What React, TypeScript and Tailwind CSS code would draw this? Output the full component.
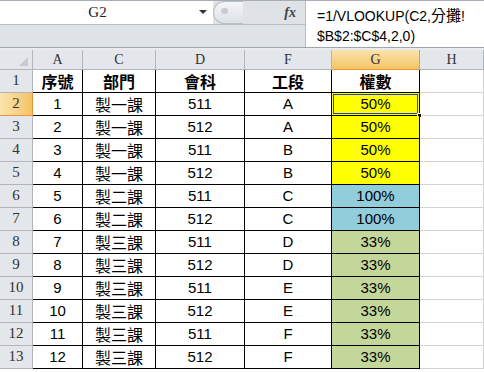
const rows: [number, string, number, string, string, string][] = [
  [1, "製一課", 511, "A", "50%", "bg-[#ffff00]"],
  [2, "製一課", 512, "A", "50%", "bg-[#ffff00]"],
  [3, "製一課", 511, "B", "50%", "bg-[#ffff00]"],
  [4, "製一課", 512, "B", "50%", "bg-[#ffff00]"],
  [5, "製二課", 511, "C", "100%", "bg-[#92cddc]"],
  [6, "製二課", 512, "C", "100%", "bg-[#92cddc]"],
  [7, "製三課", 511, "D", "33%", "bg-[#c4d79b]"],
  [8, "製三課", 512, "D", "33%", "bg-[#c4d79b]"],
  [9, "製三課", 511, "E", "33%", "bg-[#c4d79b]"],
  [10, "製三課", 512, "E", "33%", "bg-[#c4d79b]"],
  [11, "製三課", 511, "F", "33%", "bg-[#c4d79b]"],
  [12, "製三課", 512, "F", "33%", "bg-[#c4d79b]"],
];

const sans = "font-['Liberation_Sans','Noto_Sans_CJK_TC',sans-serif]";
const cjk = "font-['Noto_Sans_CJK_TC',sans-serif]";
const serif = "font-['Liberation_Serif','Noto_Sans_CJK_TC',serif]";

const colHead = `flex items-center justify-center border-r border-b border-[#b0b5bb] bg-[#e3e6ea] text-[14px] text-[#333] ${serif}`;
const selHead = `flex items-center justify-center border-r border-b border-[#f29536] bg-gradient-to-b from-[#fbe3ad] to-[#f3c464] text-[14px] text-[#333] ${serif}`;
const cell = "flex items-center justify-center border-r border-b border-black text-[15px] text-black";

function RowHead({ n, sel }: { n: number; sel?: boolean }) {
  return (
    <div
      className={`flex w-[33px] items-end justify-center border-r border-b pb-[1px] text-[15px] text-[#333] ${serif} ${
        sel ? "border-[#f29536] bg-gradient-to-r from-[#fbe3ad] to-[#f3c464]" : "border-[#b0b5bb] bg-[#e3e6ea]"
      }`}
    >
      {n}
    </div>
  );
}

export default function App() {
  return (
    <div className="relative h-[372px] w-[484px] overflow-hidden bg-white">
      {/* ── Formula bar ── */}
      <div className="flex h-[47px] border-t border-[#a7adb5] bg-[#dfe3e8]">
        <div className="flex w-[305px] flex-col">
          <div className="flex h-[24px] border-b border-[#b7bdc6]">
            <div className={`relative flex w-[213px] items-center justify-center bg-white text-[15px] text-[#222] ${serif}`}>
              <span className="pr-[18px]">G2</span>
              <span className="absolute left-[199px] top-[9px] h-0 w-0 border-x-[4px] border-t-[4px] border-x-transparent border-t-[#333]" />
            </div>
            <div className="relative h-[23px] w-[27px]">
              <div className="absolute left-0 top-0 h-[23px] w-[30px] rounded-l-full border border-r-0 border-[#b9bfc7] bg-gradient-to-b from-[#f4f5f7] to-[#dde1e6]">
                <div className="absolute left-[7px] top-[6px] h-[6px] w-[7px] rounded-full bg-[#c9cdd2]" />
              </div>
            </div>
            <div className="flex flex-1 items-center justify-end pr-[9px]">
              <span className="font-['Liberation_Serif',serif] text-[14px] font-bold italic text-[#444]">fx</span>
            </div>
          </div>
          <div className="flex-1" />
        </div>
        <div className={`flex-1 border-l border-[#b7bdc6] bg-white pl-[11px] pt-[4px] text-[14px] leading-[20px] text-black ${sans}`}>
          <div>
            =1/VLOOKUP(C2,<span className={`${cjk} text-[15px]`}>分攤</span>!
          </div>
          <div>$B$2:$C$4,2,0)</div>
        </div>
      </div>
      <div className="h-[1px] bg-[#9fa6ae]" />
      <div className="h-[2px] bg-[#e9ecef]" />

      {/* ── Sheet ── */}
      <div className="flex h-[20px]">
        <div className="relative w-[33px] border-r border-b border-[#b0b5bb] bg-[#e3e6ea]">
          <div className="absolute bottom-[3px] right-[4px] h-0 w-0 border-b-[9px] border-l-[9px] border-b-[#c6cacf] border-l-transparent" />
        </div>
        <div className={`${colHead} w-[50px]`}>A</div>
        <div className={`${colHead} w-[73px]`}>C</div>
        <div className={`${colHead} w-[89px]`}>D</div>
        <div className={`${colHead} w-[87px]`}>F</div>
        <div className={`${selHead} w-[88px]`}>G</div>
        <div className={`${colHead} flex-1`}>H</div>
      </div>

      <div className="flex h-[23px]">
        <RowHead n={1} />
        <div className={`${cell} ${cjk} w-[50px] text-[16px] font-bold`}>序號</div>
        <div className={`${cell} ${cjk} w-[73px] text-[16px] font-bold`}>部門</div>
        <div className={`${cell} ${cjk} w-[89px] text-[16px] font-bold`}>會科</div>
        <div className={`${cell} ${cjk} w-[87px] text-[16px] font-bold`}>工段</div>
        <div className={`${cell} ${cjk} w-[88px] text-[16px] font-bold`}>權數</div>
        <div className="flex-1 border-r border-b border-[#d4d4d4]" />
      </div>

      {rows.map(([no, dept, acct, seg, pct, fill], i) => (
        <div key={no} className="flex h-[23px]">
          <RowHead n={i + 2} sel={i === 0} />
          <div className={`${cell} ${sans} w-[50px]`}>{no}</div>
          <div className={`${cell} ${cjk} w-[73px] text-[16px]`}>{dept}</div>
          <div className={`${cell} ${sans} w-[89px]`}>{acct}</div>
          <div className={`${cell} ${sans} w-[87px]`}>{seg}</div>
          <div className={`${cell} ${sans} ${fill} relative w-[88px]`}>
            {pct}
            {i === 0 && (
              <>
                <div className="absolute inset-[1px] border border-[#1f3fd6]" />
                <div className="absolute -bottom-[3px] -right-[3px] h-[5px] w-[5px] border border-white bg-black" />
              </>
            )}
          </div>
          <div className="flex-1 border-r border-b border-[#d4d4d4]" />
        </div>
      ))}
    </div>
  );
}
